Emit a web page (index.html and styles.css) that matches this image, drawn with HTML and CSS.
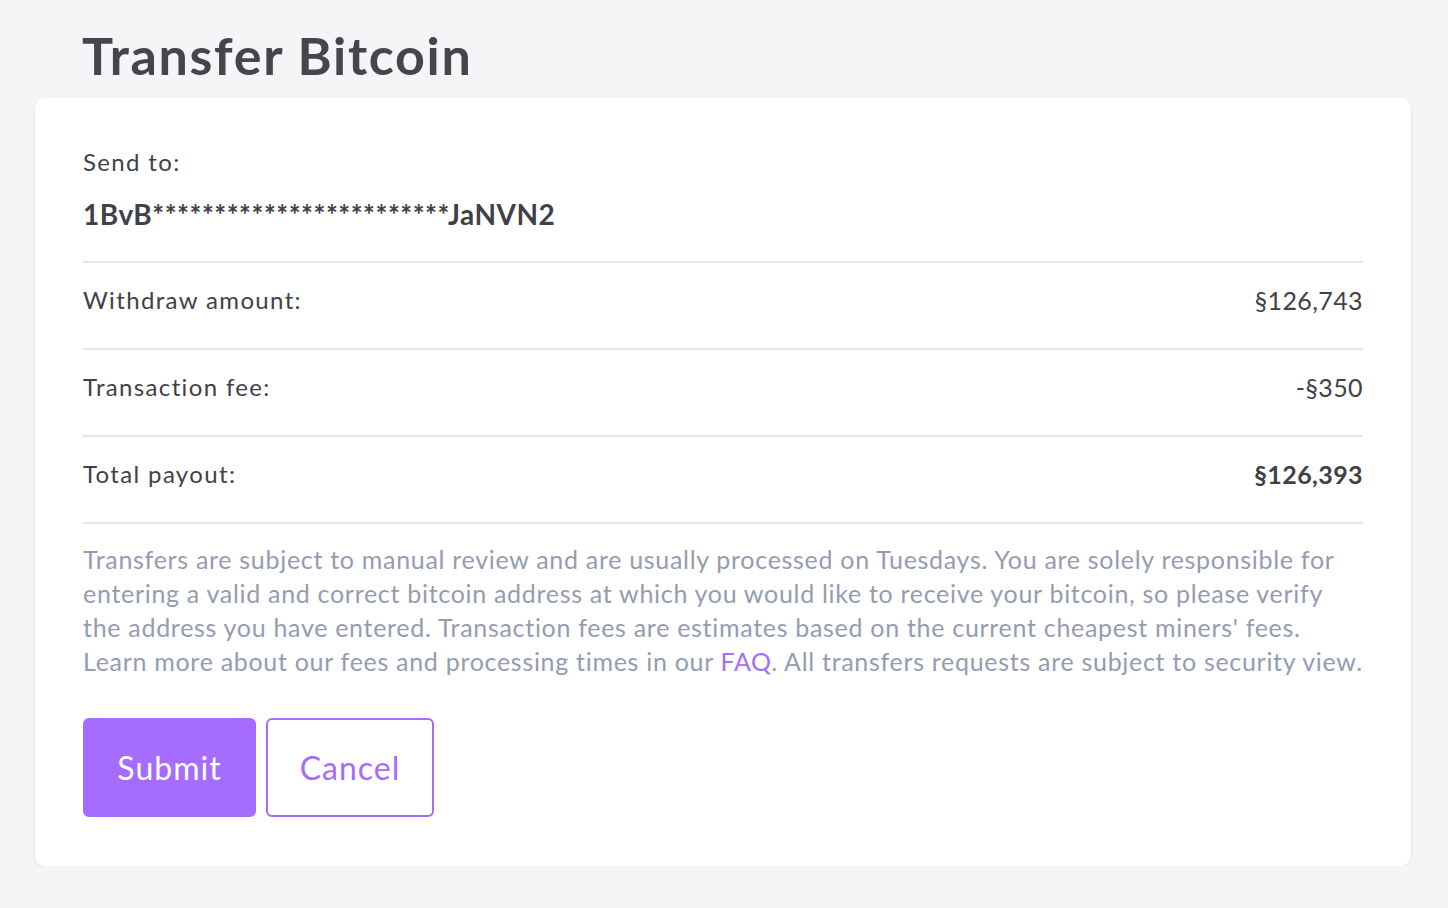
FILE: index.html
```html
<!DOCTYPE html>
<html>
<head>
<meta charset="utf-8">
<link rel="stylesheet" href="styles.css">
</head>
<body>
<div class="page">
  <h1 class="title">Transfer Bitcoin</h1>
  <div class="card">
    <div class="send">
      <div class="label">Send to:</div>
      <div class="address">1BvB************************JaNVN2</div>
    </div>
    <div class="row">
      <span class="label">Withdraw amount:</span>
      <span class="value">§126,743</span>
    </div>
    <div class="row">
      <span class="label">Transaction fee:</span>
      <span class="value">-§350</span>
    </div>
    <div class="row">
      <span class="label">Total payout:</span>
      <span class="value strong">§126,393</span>
    </div>
    <p class="note">Transfers are subject to manual review and are usually processed on Tuesdays. You are solely responsible for<br>entering a valid and correct bitcoin address at which you would like to receive your bitcoin, so please verify<br>the address you have entered. Transaction fees are estimates based on the current cheapest miners' fees.<br>Learn more about our fees and processing times in our <a class="link" href="#">FAQ</a>. All transfers requests are subject to security view.</p>
    <div class="actions">
      <button class="btn primary">Submit</button>
      <button class="btn secondary">Cancel</button>
    </div>
  </div>
</div>
</body>
</html>
```
FILE: styles.css
```css
html, body {
  margin: 0;
  padding: 0;
  background: #f4f5f7;
  font-family: "Lato", "Noto Sans", sans-serif;
  color: #3f4148;
}
.page {
  padding: 0 37px 0 35px;
}
.title {
  margin: 0 0 12px 0;
  padding: 24px 0 0 47px;
  font-size: 52px;
  line-height: 62px;
  font-weight: 700;
  letter-spacing: 1.7px;
  color: #45464c;
}
.card {
  background: #fff;
  border-radius: 10px;
  box-shadow: 0 1px 4px rgba(0,0,0,0.08);
  padding: 47px 48px 49px 48px;
}
.send {
  padding-bottom: 30px;
  border-bottom: 2px solid #e2e5ed;
}
.label {
  font-size: 24px;
  line-height: 34px;
  letter-spacing: 1.35px;
}
.address {
  margin-top: 18px;
  font-size: 28px;
  line-height: 34px;
  font-weight: 700;
  letter-spacing: 0.5px;
  color: #3f4148;
}
.row {
  display: flex;
  justify-content: space-between;
  align-items: center;
  padding: 20px 0 31px 0;
  border-bottom: 2px solid #e2e5ed;
  font-size: 24px;
  line-height: 34px;
}
.value {
  font-size: 25px;
  letter-spacing: 0.4px;
}
.value.strong {
  font-weight: 700;
}
.note {
  margin: 18px 0 0 0;
  font-size: 25px;
  line-height: 34px;
  letter-spacing: 0.7px;
  white-space: nowrap;
  color: #949cb1;
}
.link {
  color: #a66cff;
  text-decoration: none;
}
.actions {
  display: flex;
  gap: 10px;
  margin-top: 40px;
}
.btn {
  font-family: "Lato", "Noto Sans", sans-serif;
  font-size: 32px;
  letter-spacing: 1px;
  height: 99px;
  border-radius: 6px;
  cursor: pointer;
}
.primary {
  width: 173px;
  background: #a66cff;
  border: 2px solid #a66cff;
  color: #fff;
}
.secondary {
  width: 168px;
  background: #fff;
  border: 2px solid #a66cff;
  color: #a66cff;
}
```
